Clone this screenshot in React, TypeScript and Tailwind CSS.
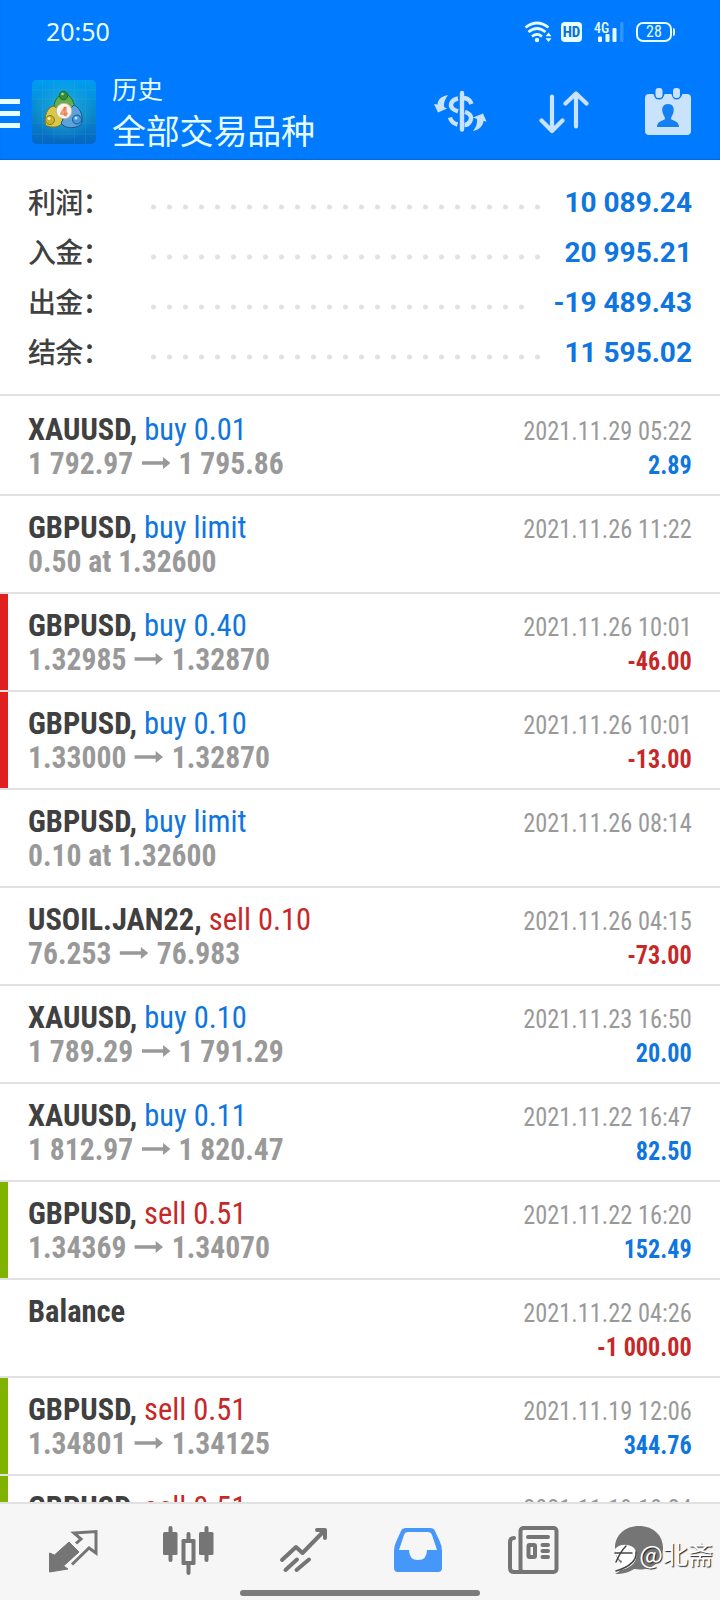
import React from 'react'

type Tone = 'buy' | 'sell'

interface Deal {
  symbol: string
  action?: string
  tone?: Tone
  from?: string
  to?: string
  note?: string
  time: string
  profit?: string
  mark?: 'red' | 'green'
}

const summary = [
  { label: '利润', value: '10 089.24', dots: 25 },
  { label: '入金', value: '20 995.21', dots: 25 },
  { label: '出金', value: '-19 489.43', dots: 24 },
  { label: '结余', value: '11 595.02', dots: 25 },
]

const deals: Deal[] = [
  { symbol: 'XAUUSD', action: 'buy 0.01', tone: 'buy', from: '1 792.97', to: '1 795.86', time: '2021.11.29 05:22', profit: '2.89' },
  { symbol: 'GBPUSD', action: 'buy limit', tone: 'buy', note: '0.50 at 1.32600', time: '2021.11.26 11:22' },
  { symbol: 'GBPUSD', action: 'buy 0.40', tone: 'buy', from: '1.32985', to: '1.32870', time: '2021.11.26 10:01', profit: '-46.00', mark: 'red' },
  { symbol: 'GBPUSD', action: 'buy 0.10', tone: 'buy', from: '1.33000', to: '1.32870', time: '2021.11.26 10:01', profit: '-13.00', mark: 'red' },
  { symbol: 'GBPUSD', action: 'buy limit', tone: 'buy', note: '0.10 at 1.32600', time: '2021.11.26 08:14' },
  { symbol: 'USOIL.JAN22', action: 'sell 0.10', tone: 'sell', from: '76.253', to: '76.983', time: '2021.11.26 04:15', profit: '-73.00' },
  { symbol: 'XAUUSD', action: 'buy 0.10', tone: 'buy', from: '1 789.29', to: '1 791.29', time: '2021.11.23 16:50', profit: '20.00' },
  { symbol: 'XAUUSD', action: 'buy 0.11', tone: 'buy', from: '1 812.97', to: '1 820.47', time: '2021.11.22 16:47', profit: '82.50' },
  { symbol: 'GBPUSD', action: 'sell 0.51', tone: 'sell', from: '1.34369', to: '1.34070', time: '2021.11.22 16:20', profit: '152.49', mark: 'green' },
  { symbol: 'Balance', time: '2021.11.22 04:26', profit: '-1 000.00' },
  { symbol: 'GBPUSD', action: 'sell 0.51', tone: 'sell', from: '1.34801', to: '1.34125', time: '2021.11.19 12:06', profit: '344.76', mark: 'green' },
  { symbol: 'GBPUSD', action: 'sell 0.51', tone: 'sell', time: '2021.11.19 10:24', mark: 'green' },
]

function StatusBar() {
  return (
    <div className="flex h-16 items-center justify-between pl-[46px] pr-[45px] text-[#e6fdff]">
      <span className="mb-[2px] font-['Noto_Sans','Roboto',sans-serif] text-[25px] leading-none">20:50</span>
      <div className="flex items-center">
        {/* wifi with traffic arrows */}
        <svg width="28" height="22" viewBox="0 0 28 22" fill="none" stroke="currentColor" strokeWidth="2.8" className="mr-[9px] overflow-visible">
          <path d="M1.500 6.500Q13 -2.500 24.500 6.500" />
          <path d="M4.500 11Q13 4 21.500 11" />
          <path d="M8 15.500Q13 11.300 18 15.500" />
          <circle cx="13" cy="19" r="2.200" fill="currentColor" stroke="none" />
          <path d="M21.500 15.300L24.500 11.500L27.500 15.300ZM21.500 17.200L24.500 21L27.500 17.200Z" fill="currentColor" stroke="none" />
        </svg>
        <span className="mr-3 flex h-5 w-[21px] items-center justify-center rounded bg-[#e6fdff] font-['Roboto_Condensed','Roboto',sans-serif] text-[15px] font-bold leading-none text-[#0a6fd8]">
          HD
        </span>
        <svg width="30" height="22" viewBox="0 0 30 22" fill="currentColor" className="mr-3">
          <text x="0" y="11.500" fontSize="14" fontWeight="500" className="font-['Roboto_Condensed','Roboto',sans-serif]">4G</text>
          <rect x="4" y="15.500" width="4" height="5.500" rx="1" />
          <rect x="11.500" y="13" width="4" height="8" rx="1" />
          <rect x="18.500" y="7" width="4" height="14" rx="1" />
          <rect x="26" y="1" width="3.500" height="20" rx="1" opacity=".2" />
        </svg>
        <div className="flex items-center">
          <span className="flex h-5 w-9 items-center justify-center rounded-[7px] border-2 border-current font-['Roboto_Condensed','Roboto',sans-serif] text-[16px] leading-none">28</span>
          <span className="ml-px h-[8px] w-[2px] rounded-r bg-current" />
        </div>
      </div>
    </div>
  )
}

function AppLogo() {
  return (
    <svg width="64" height="64" viewBox="0 0 64 64">
      <defs>
        <linearGradient id="tile" x1="0" y1="0" x2="0" y2="1">
          <stop offset="0" stopColor="#009df0" />
          <stop offset=".55" stopColor="#0a86c9" />
          <stop offset="1" stopColor="#0566c0" />
        </linearGradient>
        <radialGradient id="glow" cx=".5" cy=".5" r=".5">
          <stop offset="0" stopColor="#2fb8d6" />
          <stop offset="1" stopColor="#2fb8d6" stopOpacity="0" />
        </radialGradient>
      </defs>
      <rect width="64" height="64" rx="5" fill="url(#tile)" />
      <circle cx="32" cy="30" r="31" fill="url(#glow)" opacity=".7" />
      <path d="M10.500 0V64M22 0V64M42.500 0V64M53.500 0V64M0 10H64M0 19H64M0 43H64M0 54H64" stroke="#5fd0f4" strokeWidth=".6" opacity=".2" />
      <g strokeWidth="1">
        <path d="M32 13C25 15 21 23 22 30L32 35L43 30C43 23 39 15 32 13Z" fill="#62ad4c" stroke="#1d6b32" />
        <path d="M22 26C15 27 12 36 13.500 45C19 48.500 29 48 31 41L27 30Z" fill="#d9c84c" stroke="#7c7420" />
        <path d="M42 25C49 28 52 38 49 44.500C43 49 33 49 29 43L36 31Z" fill="#5ba3d8" stroke="#1b5590" />
        <circle cx="31.500" cy="15.500" r="4.200" fill="#358f3c" stroke="#1d6b32" />
        <circle cx="18" cy="40" r="4.500" fill="#c9b22e" stroke="#8b7c20" />
        <circle cx="45" cy="39.500" r="4.500" fill="#4497dd" stroke="#1b5590" />
        <circle cx="17" cy="38.500" r="1.500" fill="#fbf3a8" stroke="none" />
        <circle cx="44" cy="38" r="1.500" fill="#c3e6ff" stroke="none" />
        <circle cx="30.500" cy="14" r="1.300" fill="#a6e08c" stroke="none" />
      </g>
      <circle cx="32" cy="31" r="7.800" fill="#f8f4ee" stroke="#c4b79a" />
      <text x="32" y="35.500" textAnchor="middle" fontSize="13" fontWeight="700" fill="#f6a27a" stroke="#e8703a" strokeWidth=".5" className="font-['Roboto',sans-serif]">4</text>
    </svg>
  )
}

function Header() {
  return (
    <header className="h-40 bg-[#007aff] text-[#e6fdff] shadow-[inset_0_-1px_1px_#0068da]">
      <StatusBar />
      <div className="flex h-24">
        <div className="mt-[35px] flex w-5 flex-col gap-[7px]">
          <span className="h-[5px] bg-current" />
          <span className="h-[5px] bg-current" />
          <span className="h-[5px] bg-current" />
        </div>
        <div className="ml-3 mt-4">
          <AppLogo />
        </div>
        <div className="ml-4 mt-2 font-['Noto_Sans_CJK_SC',sans-serif]">
          <div className="text-[25.5px] leading-[32px]">历史</div>
          <div className="mt-[5px] text-[34px] leading-[42px] tracking-[-0.2px]">全部交易品种</div>
        </div>
        <div className="ml-auto mr-[29px] flex text-[#cae3fd]">
          {/* symbol filter */}
          <svg width="54" height="48" viewBox="0 0 54 48" className="mr-[51px] mt-[23px]" fill="none" stroke="currentColor">
            <path d="M28 6V42.500" strokeWidth="4.400" strokeLinecap="round" />
            <path d="M37.500 17C36 12.500 33 11.300 30 11M24 11.500C18 12.500 15 17.500 18.500 21.500C20 23 22 23.700 24 24.300M31 25C36.500 26.500 38.500 30.500 36 34.500C34.500 37 32.500 38 30.500 38M23.500 37.500C19.500 36.500 17 34 16 30.500" strokeWidth="4.400" />
            <path d="M14 8C8 9 4 12 3.500 17.500L0 17L4 25.500L13 21.500L10 20C9.500 16 11 12 14 8Z" fill="currentColor" stroke="none" />
            <path d="M39 44C45 43 49 39 49.500 34L52.500 34.500L49 26.500L39 30.500L43 32C43.500 36.500 42 40.500 39 44Z" fill="currentColor" stroke="none" />
          </svg>
          <svg width="50" height="44" viewBox="0 0 50 44" className="mr-[56px] mt-[26px]" fill="none" stroke="currentColor" strokeWidth="4.200" strokeLinecap="round" strokeLinejoin="round">
            <path d="M13 6.500V40M2.500 30.500L13 41L23.500 30.500" />
            <path d="M37 36.500V4M26.500 13.500L37 3.500L47.500 13.500" />
          </svg>
          <svg width="46" height="48" viewBox="0 0 46 48" className="mt-[23px]">
            <path d="M4 7H8.500Q9.500 12.500 14 12.500T19.500 7H26.500Q27.500 12.500 31.500 12.500T37.500 7H42Q46 7 46 11V44Q46 48 42 48H4Q0 48 0 44V11Q0 7 4 7Z" fill="currentColor" />
            <rect x="10.500" y="1" width="7" height="10" rx="3" fill="currentColor" />
            <rect x="28" y="1" width="7" height="10" rx="3" fill="currentColor" />
            <path d="M23 17C18.500 17 16.500 20.500 17.500 25C18 28 20 29.500 20 32C18 34 12 34 12 40H34C34 34 28 34 26 32C26 29.500 28 28 28.500 25C29.500 20.500 27.500 17 23 17Z" fill="#1580f0" />
          </svg>
        </div>
      </div>
    </header>
  )
}

function Summary() {
  return (
    <section className="h-[236px] border-b-2 border-[#e1e1e1] px-7 pt-[17px]">
      {summary.map((row) => (
        <div key={row.label} className="flex h-[50px] items-center">
          <span className="mb-[2px] w-[122px] font-['Noto_Sans_CJK_SC',sans-serif] text-[28px] font-medium leading-[48px] tracking-[-0.8px] text-[#404040]">
            {row.label}：
          </span>
          <svg width={row.dots * 16} height="6" className="mt-[9px]" fill="#e1e1e1">
            {Array.from({ length: row.dots }, (_, i) => (
              <circle key={i} cx={3.5 + i * 16} cy="3" r="2.5" />
            ))}
          </svg>
          <span className="ml-auto mt-[2px] font-['Roboto',sans-serif] text-[28px] font-bold text-[#0f76e0]">{row.value}</span>
        </div>
      ))}
    </section>
  )
}

function DealRow({ deal, first }: { deal: Deal; first: boolean }) {
  return (
    <div className={`flex shrink-0 border-b-2 border-[#e1e1e1] font-['Roboto_Condensed','Roboto',sans-serif] ${first ? 'h-[100px]' : 'h-[98px]'}`}>
      <span className={`w-2 ${deal.mark === 'red' ? 'bg-[#e02020]' : deal.mark === 'green' ? 'bg-[#80b300]' : ''}`} />
      <div className={`flex flex-1 justify-between pl-5 pr-7 ${first ? 'pt-4' : 'pt-[14px]'}`}>
        <div className="whitespace-nowrap text-[32px] leading-[34px]">
          <div className="origin-left scale-x-[0.953]">
            <span className="font-bold text-[#404040]">{deal.symbol}{deal.action && ','}</span>
            {deal.action && (
              <span className={deal.tone === 'buy' ? 'text-[#0f76e0]' : 'text-[#c62828]'}> {deal.action}</span>
            )}
          </div>
          {deal.note && <div className="origin-left scale-x-[0.925] font-bold text-[#999]">{deal.note}</div>}
          {deal.from && (
            <div className="flex origin-left scale-x-[0.925] items-center font-bold text-[#999]">
              {deal.from}
              <svg width="31" height="12" viewBox="0 0 31 12" className="ml-[9px] mr-[9px]">
                <path d="M0 4.200H23V0L31 6L23 12V7.800H0Z" fill="currentColor" />
              </svg>
              {deal.to}
            </div>
          )}
        </div>
        <div className="pt-[2px] text-right text-[26px] leading-[34px]">
          <div className="origin-right scale-x-[0.9375] text-[#999]">{deal.time}</div>
          {deal.profit && (
            <div className={`origin-right scale-x-[0.93] font-bold ${deal.profit.startsWith('-') ? 'text-[#c62828]' : 'text-[#0f76e0]'}`}>{deal.profit}</div>
          )}
        </div>
      </div>
    </div>
  )
}

function BottomNav() {
  return (
    <nav className="relative h-[98px] border-t-2 border-[#e1e1e1] bg-[#f6f6f6] text-[#757575]">
      <div className="flex pt-6">
        {/* quotes */}
        <svg width="50" height="50" viewBox="0 0 50 50" className="ml-[48px] overflow-visible">
          <path d="M1.500 25L6.500 27L21 14L31 24L15.500 38L20 41L1.500 44Z" fill="currentColor" stroke="currentColor" strokeLinejoin="round" />
          <path d="M28 15.500L33 11L26 5L48 3.500V25L41 20L24 36.500" fill="none" stroke="currentColor" strokeWidth="3" />
        </svg>
        {/* charts */}
        <svg width="51" height="50" viewBox="0 0 51 50" className="ml-[65px] overflow-visible" fill="currentColor">
          <rect x="5.500" y="-2" width="4" height="36" rx="2" />
          <rect x="0" y="4" width="14.500" height="23" rx="1.500" />
          <rect x="41.500" y="-2" width="4" height="36" rx="2" />
          <rect x="36" y="4" width="14.500" height="23" rx="1.500" />
          <rect x="23.500" y="4" width="4" height="43" rx="2" />
          <rect x="18.500" y="11" width="14" height="26" rx="1.500" />
          <rect x="22.500" y="15" width="6" height="18" fill="#f6f6f6" />
        </svg>
        {/* trade */}
        <svg width="50" height="50" viewBox="0 0 50 50" className="ml-[64px] overflow-visible" fill="none" stroke="currentColor" strokeWidth="4" strokeLinecap="round" strokeLinejoin="round">
          <path d="M4 32L18 19L24.500 25L46 3M39 2H47V10" />
          <path d="M7.500 42L19 31.500M18.500 42L31 31.500" />
        </svg>
        {/* history, active */}
        <svg width="48" height="50" viewBox="0 0 48 50" className="ml-[66px]">
          <path d="M12 0H36Q40 0 41 3L46 14Q48 18 48 23V40Q48 44 44 44H4Q0 44 0 40V23Q0 18 2 14L7 3Q8 0 12 0Z" fill="#4597fa" />
          <path d="M14 4H34Q37 4 38 7L43 22H33Q33 32 24 32T15 22H5L10 7Q11 4 14 4Z" fill="#f6f6f6" />
        </svg>
        {/* news */}
        <svg width="52" height="50" viewBox="0 0 52 50" className="ml-[66px] overflow-visible" fill="none" stroke="currentColor" strokeWidth="4" strokeLinecap="round">
          <rect x="12.500" y="0" width="36" height="44" rx="3" />
          <path d="M6 10Q2 10 2 14V40Q2 44 6 44H14" />
          <path d="M20 9H40M34.500 17H40M34.500 23H40M34.500 29H40" />
          <rect x="20.500" y="17" width="6.500" height="12" rx="1" />
        </svg>
        {/* chat */}
        <svg width="50" height="50" viewBox="0 0 50 50" className="ml-[54px] overflow-visible">
          <path d="M25 -2C11 -2 1 7 1 20C1 27 4 33 9 37Q8 43 1 46C9 46 16 44 20 41C38 44 49 33 49 20C49 7 39 -2 25 -2Z" fill="currentColor" />
        </svg>
      </div>
      {/* author tag laid over the last tab */}
      <div className="absolute right-[7px] top-[29px] flex items-center font-['Noto_Sans_CJK_SC',sans-serif] text-[25px] leading-[34px] text-white [text-shadow:1px_1px_1px_#222]">
        <svg width="25" height="32" viewBox="0 0 25 32" className="mt-2 overflow-visible" strokeLinejoin="round">
          <path d="M1 8C5 3 14 2 20 7C24 12 23 20 18 24C13 28 7 29 1 30C5 27 7 24 8 20C4 18 1 14 1 8Z" fill="#fff" />
          <path d="M1 12H18M12 5C8 9 5 14 2 21M22 11C23 20 15 26 2 30" fill="none" stroke="#444" strokeWidth="1.500" strokeLinecap="round" />
        </svg>
        @北斋
      </div>
      <div className="absolute bottom-1 left-60 h-[6px] w-60 rounded-full bg-[#7c7c7c]" />
    </nav>
  )
}

export default function App() {
  return (
    <div className="flex h-[1600px] w-[720px] flex-col overflow-hidden bg-white">
      <Header />
      <Summary />
      <main className="flex min-h-0 flex-1 flex-col overflow-hidden">
        {deals.map((deal, i) => (
          <DealRow key={i} deal={deal} first={i === 0} />
        ))}
      </main>
      <BottomNav />
    </div>
  )
}
